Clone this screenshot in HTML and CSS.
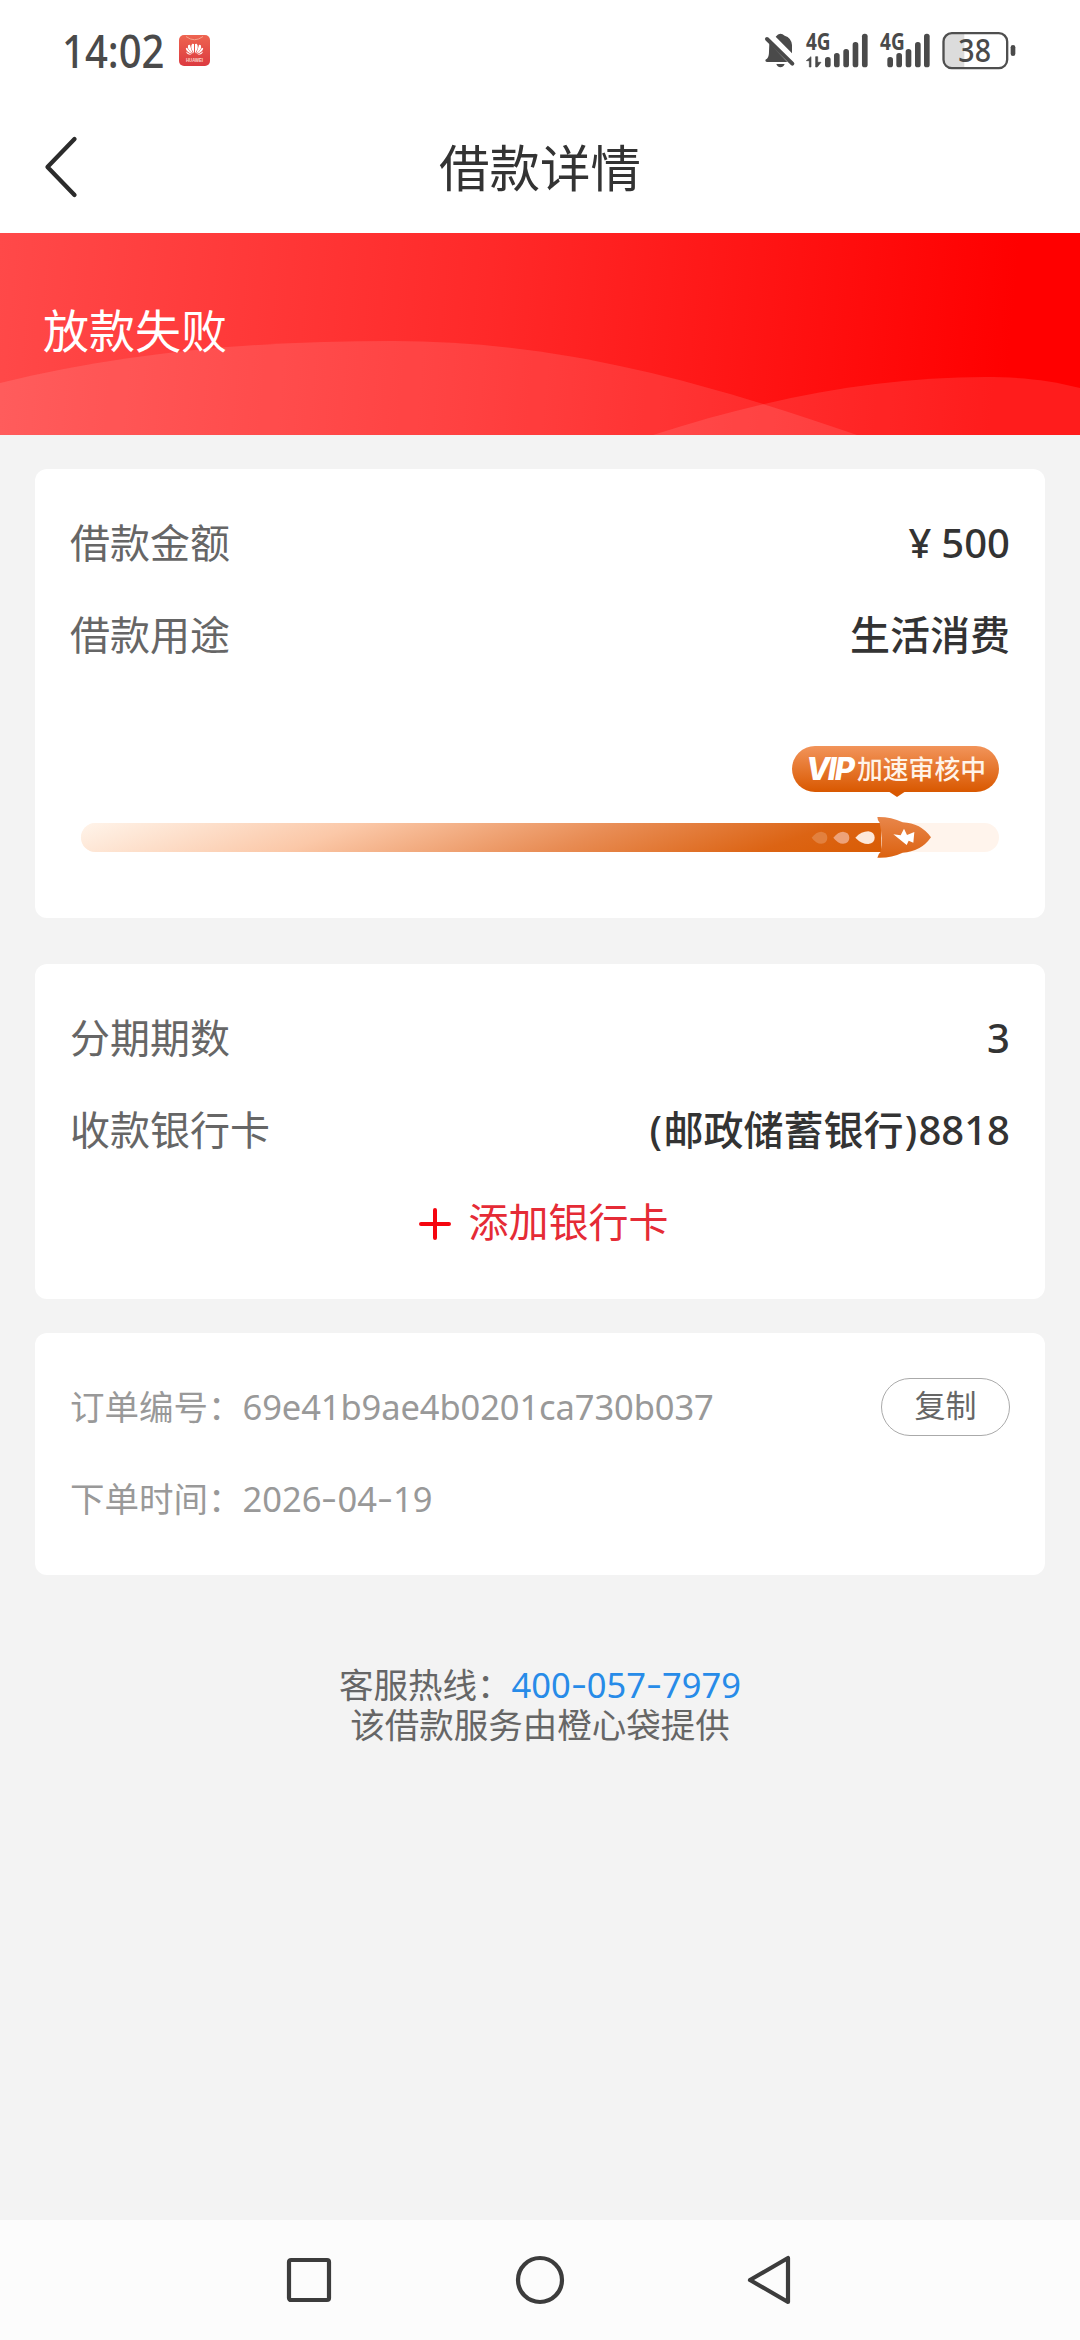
FILE: index.html
```html
<!DOCTYPE html>
<html lang="zh-CN">
<head>
<meta charset="utf-8">
<title>借款详情</title>
<link rel="stylesheet" href="styles.css">
</head>
<body>
<div class="screen">
  <div class="status-bar">
    <div class="status-left">
      <span class="clock">14:02</span>
      <svg class="app-badge" viewBox="0 0 31 31">
        <defs><linearGradient id="badge" x1="0" y1="0" x2="0" y2="1"><stop offset="0" stop-color="#ee6450"/><stop offset="1" stop-color="#dc3a40"/></linearGradient></defs>
        <rect width="31" height="31" rx="5" fill="url(#badge)"/>
        <path d="M7 1.5Q15.500 8 24 1.500" fill="none" stroke="#f4a48c" stroke-width="1"/>
        <g fill="#fff">
          <path d="M15 18.500Q10.500 12 13.300 8.800L15 9Z"/>
          <path d="M14 18.500Q8 14.500 9 10.500Q10 9.500 11 10Q12 14.500 14 18.500Z"/>
          <path d="M13.500 19Q7 17 6.800 13.200L8 12.700Q10 16 13.500 19Z"/>
          <path d="M12.500 19.700Q8 20 7 16.500Q9.500 18.500 12.500 19.700Z"/>
          <path d="M16 18.500Q20.500 12 17.700 8.800L16 9Z"/>
          <path d="M17 18.500Q23 14.500 22 10.500Q21 9.500 20 10Q19 14.500 17 18.500Z"/>
          <path d="M17.500 19Q24 17 24.200 13.200L23 12.700Q21 16 17.500 19Z"/>
          <path d="M18.500 19.700Q23 20 24 16.500Q21.500 18.500 18.500 19.700Z"/>
        </g>
        <text x="15.500" y="27" text-anchor="middle" class="badge-text" textLength="17" lengthAdjust="spacingAndGlyphs">HUAWEI</text>
      </svg>
    </div>
    <div class="status-right">
      <svg class="icon-bell" viewBox="70 90 93 120" fill="#4a4a4a">
        <path d="M105 110Q112 101 119 101Q126 101 132 107Q152 113 154 135V160Z"/>
        <path d="M86 130L140 186H79Q74 186 74 181Q74 178 79 176Q85 170 85 155Z"/>
        <path d="M107 192H132Q128 202 119 202Q111 202 107 192Z"/>
        <path d="M79 117L155 191" stroke="#4a4a4a" stroke-width="12" stroke-linecap="round"/>
      </svg>
      <svg class="icon-signal-a" viewBox="198 90 187 120" fill="#4a4a4a">
        <text x="198" y="150" class="net" textLength="74" lengthAdjust="spacingAndGlyphs">4G</text>
        <path d="M208 201V182H199L213 170V201ZM227 170V201H232L243 187H233V170Z" stroke="#4a4a4a" stroke-width="2"/>
        <rect x="255" y="171" width="17" height="31" rx="8"/><rect x="282" y="159" width="17" height="43" rx="8"/><rect x="310" y="147" width="17" height="55" rx="8"/><rect x="338" y="126" width="17" height="76" rx="8"/><rect x="366" y="101" width="17" height="101" rx="8"/>
      </svg>
      <svg class="icon-signal-b" viewBox="420 90 150 120" fill="#4a4a4a">
        <text x="420" y="150" class="net" textLength="74" lengthAdjust="spacingAndGlyphs">4G</text>
        <rect x="442" y="171" width="17" height="31" rx="8"/><rect x="469" y="159" width="17" height="43" rx="8"/><rect x="497" y="147" width="17" height="55" rx="8"/><rect x="525" y="126" width="17" height="76" rx="8"/><rect x="552" y="101" width="17" height="101" rx="8"/>
      </svg>
      <svg class="icon-battery" viewBox="605 90 222 120">
        <path d="M672 100H634Q610 100 610 124V180Q610 204 634 204H672Z" fill="#dcdcdc"/>
        <rect x="609.500" y="99.500" width="191" height="105" rx="25" fill="none" stroke="#4f4f4f" stroke-width="7"/>
        <rect x="811" y="135" width="14" height="33" rx="7" fill="#4a4a4a"/>
        <text x="654" y="185" class="level" textLength="98" lengthAdjust="spacingAndGlyphs">38</text>
      </svg>
    </div>
  </div>

  <header class="title-bar">
    <svg class="back" viewBox="0 0 36 64"><path d="M31.500 4L4.500 32L31.500 60" fill="none" stroke="#2b2b2b" stroke-width="4.300" stroke-linecap="round" stroke-linejoin="round"/></svg>
    <h1 class="title">借款详情</h1>
  </header>

  <section class="banner">
    <svg class="hills" viewBox="0 0 1080 202" preserveAspectRatio="none" fill="#fff" fill-opacity=".11">
      <path d="M0 150C130 118 260 108 393 108C550 108 690 144 857 202H0Z"/>
      <path d="M653 202C770 164 880 144 985 144C1020 144 1050 147 1080 155V202Z"/>
    </svg>
    <p class="banner-text">放款失败</p>
  </section>

  <main class="content">
    <section class="card card-amount">
      <div class="row"><span class="label">借款金额</span><span class="value"><span class="yen">¥</span>500</span></div>
      <div class="row"><span class="label">借款用途</span><span class="value">生活消费</span></div>
      <div class="progress">
        <div class="tip"><span class="vip">VIP</span><span class="tip-text">加速审核中</span></div>
        <div class="track"><div class="fill"></div>
          <svg class="rocket" viewBox="150 945 375 135">
            <defs><linearGradient id="hull" x1="0" y1="0" x2="0" y2="1"><stop offset="0" stop-color="#e8864a"/><stop offset="1" stop-color="#dc6210"/></linearGradient></defs>
            <path d="M155 1013Q168 995 184 995Q202 997 202 1013Q202 1029 184 1031Q168 1031 155 1013Z" fill="#e2803e"/>
            <path d="M220 1013Q234 995 249 995Q268 997 268 1013Q268 1029 249 1031Q234 1031 220 1013Z" fill="#eda27a"/>
            <path d="M286 1013Q304 994 325 994Q344 997 344 1013Q344 1029 325 1032Q304 1032 286 1013Z" fill="#fde8da"/>
            <path d="M352 951Q392 950 428 967Q482 969 513 1012Q482 1056 428 1058Q392 1075 352 1073Q354 1062 362 1056Q369 1013 359 968Q352 960 352 951Z" fill="url(#hull)"/>
            <path d="M400 1003L422 1006L432 986L441 1005L463 996L460 1028L446 1022L440 1035Z" fill="#fff"/>
          </svg>
        </div>
      </div>
    </section>

    <section class="card card-bank">
      <div class="row"><span class="label">分期期数</span><span class="value">3</span></div>
      <div class="row"><span class="label">收款银行卡</span><span class="value"><span class="paren">(</span>邮政储蓄银行<span class="paren">)</span>8818</span></div>
      <div class="row add-bank">
        <svg class="plus" viewBox="0 0 32 32"><path d="M16 2V30M2 16H30" stroke="#f5050f" stroke-width="4" stroke-linecap="round"/></svg>
        <span>添加银行卡</span>
      </div>
    </section>

    <section class="card card-order">
      <div class="row order"><span>订单编号：<span class="order-no">69e41b9ae4b0201ca730b037</span></span><button class="copy">复制</button></div>
      <div class="row order"><span>下单时间：2026<span class="dash">-</span>04<span class="dash">-</span>19</span></div>
    </section>

    <footer class="support">
      <p>客服热线：<span class="phone">400<span class="dash">-</span>057<span class="dash">-</span>7979</span></p>
      <p>该借款服务由橙心袋提供</p>
    </footer>
  </main>

  <nav class="nav-bar">
    <svg viewBox="0 0 48 48"><rect x="4" y="4" width="40" height="40" rx="2"/></svg>
    <svg viewBox="0 0 48 48"><circle cx="24" cy="24" r="22"/></svg>
    <svg viewBox="0 0 48 48"><path d="M3 24L41 2V46Z"/></svg>
  </nav>
</div>
</body>
</html>
```
FILE: styles.css
```css
* { box-sizing: border-box; margin: 0; padding: 0; }
body { background: #f3f3f3; font-family: "Noto Sans", "Noto Sans CJK SC", sans-serif; color: #333; }
svg { display: block; flex: none; overflow: visible; }
.screen { width: 1080px; height: 2340px; display: flex; flex-direction: column; }

.status-bar { height: 100px; padding: 30px 64px 0 62px; display: flex; justify-content: space-between; background: #fff; }
.status-left { display: flex; gap: 14px; height: 40px; }
.clock { width: 103px; font-size: 45px; line-height: 42px; color: #4a4a4a; font-weight: 500; white-space: nowrap; transform: scaleX(.89); transform-origin: left; }
.app-badge { width: 31px; height: 31px; margin-top: 5px; }
.badge-text { font: bold 5px "Liberation Sans", sans-serif; fill: #fbd5cf; }
.status-right { display: flex; }
.status-right svg { height: 40px; }
.icon-bell { width: 31px; }
.icon-signal-a { width: 62.300px; margin-left: 11.700px; }
.icon-signal-b { width: 50px; margin-left: 11.700px; }
.icon-battery { width: 74px; margin-left: 11.700px; }
.net { font: 700 68px "Noto Sans", sans-serif; }
.level { font: 500 95px "Noto Sans", sans-serif; fill: #4a4a4a; }

.title-bar { height: 133px; padding: 0 43px; display: grid; grid-template-columns: 36px 1fr 36px; align-items: center; background: #fff; }
.back { width: 36px; height: 64px; }
.title { font-size: 50.500px; font-weight: 400; line-height: 70px; padding-top: 2px; text-align: center; }

.banner { position: relative; height: 202px; padding: 0 43px; display: flex; align-items: center; background: linear-gradient(95deg, #ff4949 0%, #ff2929 45%, #ff0000 93%); }
.hills { position: absolute; inset: 0; width: 100%; height: 100%; }
.banner-text { position: relative; font-size: 46px; line-height: 60px; padding-bottom: 9px; color: #fff; }

.content { flex: 1; display: flex; flex-direction: column; padding: 34px 35px 0; }
.card { background: #fff; border-radius: 12px; padding: 28px 35px 0; }
.card-amount { height: 449px; }
.card-bank { height: 335px; margin-top: 46px; }
.card-order { height: 242px; margin-top: 34px; }
.row { height: 92px; display: flex; align-items: center; justify-content: space-between; font-size: 40px; line-height: 56px; }
.label { color: #666; }
.value { font-weight: 500; white-space: nowrap; }
.yen { margin-right: 10px; }
.paren { padding: 0 1.300px; }

.progress { display: flex; flex-direction: column; padding: 65px 11px 0; }
.tip { position: relative; align-self: flex-end; width: 207px; height: 46px; padding-left: 14px; display: flex; align-items: center; border-radius: 23px; background: linear-gradient(#f2945a, #d95800); color: #fff; }
.tip::after { content: ""; position: absolute; left: 96px; top: 45px; border: solid transparent; border-width: 6px 9px 0; border-top-color: #d95800; }
.vip { width: 51px; font: italic 800 31px/46px Inter, sans-serif; letter-spacing: -2px; }
.tip-text { font-size: 25.800px; font-weight: 500; line-height: 46px; white-space: nowrap; color: #fff3e8; }
.track { position: relative; height: 29px; margin-top: 31px; border-radius: 15px; background: #fff4ec; }
.fill { width: 800px; height: 29px; border-radius: 15px 0 0 15px; background: linear-gradient(160deg, #fff4ea 0%, #fbc8a8 32%, #e88c54 62%, #dc6414 86%, #d95c04 100%); }
.rocket { position: absolute; left: 729px; top: -8px; width: 125px; height: 45px; }

.add-bank { justify-content: center; gap: 18px; padding-left: 7px; color: #e52b36; }
.plus { width: 32px; height: 32px; margin-top: 4px; }

.order { font-size: 34.500px; color: #999; }
.order-no { letter-spacing: -.1px; }
.copy { width: 129px; height: 58px; padding-bottom: 4px; border: 1px solid #aaa; border-radius: 29px; background: #fff; color: #666; font: 31px/52px "Noto Sans", "Noto Sans CJK SC", sans-serif; }
.dash { display: inline-block; width: 16px; text-align: center; transform: translateY(-2px) scaleX(1.400); }

.support { padding-top: 90px; text-align: center; font-size: 34.500px; line-height: 40px; color: #666; }
.phone { color: #278be8; }

.nav-bar { height: 120px; display: flex; align-items: center; justify-content: center; gap: 183px; background: #fcfcfc; }
.nav-bar svg { width: 48px; height: 48px; fill: none; stroke: #3c3c3c; stroke-width: 4.200; stroke-linejoin: round; }
```
